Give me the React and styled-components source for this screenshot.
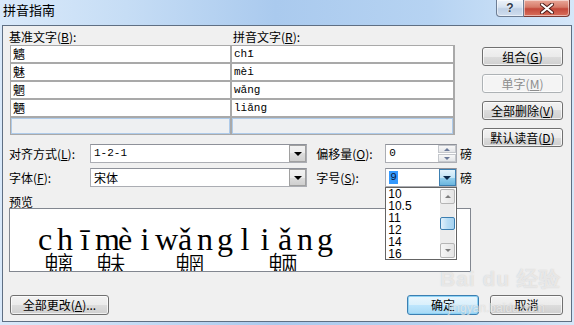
import React from "react";
import styled, { createGlobalStyle } from "styled-components";

const GlobalStyle = createGlobalStyle`
  html, body {
    margin: 0;
    padding: 0;
    background: #c9dff5;
  }
  body {
    font-family: "Noto Sans CJK SC", "Liberation Sans", sans-serif;
    font-size: 12px;
    color: #000;
  }
`;

const Window = styled.div`
  width: 574px;
  height: 325px;
  box-sizing: border-box;
  display: flex;
  flex-direction: column;
  padding: 0 2px 3px 2px;
  background: linear-gradient(90deg, #d9e9fa 0%, #c6ddf5 22%, #aacaee 48%, #b6d3f2 75%, #d5e7f9 100%);
`;

const TitleBar = styled.div`
  height: 25px;
  display: flex;
  align-items: flex-start;
  justify-content: space-between;
  margin: 0 -2px;
`;

const Title = styled.div`
  padding: 2px 0 0 3px;
  font-size: 13px;
  line-height: 16px;
  color: #000;
`;

const Caption = styled.div`
  display: flex;
  margin-right: 4px;
`;

const CapButton = styled.div`
  height: 17px;
  box-sizing: border-box;
  display: flex;
  align-items: center;
  justify-content: center;
  border: 1px solid ${(p) => (p.$close ? "#7a3a34" : "#6d7d94")};
  border-top: none;
  width: ${(p) => (p.$close ? "46px" : "28px")};
  border-radius: ${(p) => (p.$close ? "0 0 4px 0" : "0 0 0 4px")};
  border-left: ${(p) => (p.$close ? "none" : undefined)};
  background: ${(p) =>
    p.$close
      ? "linear-gradient(#e9a99a 0%, #d67a68 45%, #c3483a 55%, #d9705c 100%)"
      : "linear-gradient(#eef3fa 0%, #d6e2f0 45%, #bfd0e5 55%, #d0ddee 100%)"};
  box-shadow: inset 0 0 0 1px rgba(255, 255, 255, 0.5);
  font-family: "Liberation Sans", sans-serif;
  font-weight: bold;
  font-size: 12px;
  color: #2f3a4a;
  text-shadow: 0 0 2px #fff;
`;

const Client = styled.div`
  position: relative;
  flex: 1;
  background: #f0f0f0;
  border: 1px solid #5f6f83;
  display: flex;
  flex-direction: column;
`;

const Main = styled.div`
  display: flex;
  padding: 4px 0 0 6px;
  gap: 10px;
`;

const LeftCol = styled.div`
  width: 463px;
  display: flex;
  flex-direction: column;
`;

const HeadRow = styled.div`
  display: flex;
  line-height: 14px;
  height: 14px;
`;

const HeadLabel = styled.div`
  width: ${(p) => p.$w}px;
`;

const Key = styled.span`
  text-decoration: underline;
`;

const Grid = styled.div`
  margin: 1px 0 0 1px;
  width: 445px;
  box-sizing: border-box;
  display: grid;
  grid-template-columns: 219px 221px;
  grid-auto-rows: 16px;
  gap: 2px;
  padding: 1px;
  background: #a9a9a9;
`;

const Cell = styled.div`
  background: ${(p) => (p.$empty ? "#eef0f2" : "#fff")};
  box-shadow: ${(p) => (p.$empty ? "inset 0 0 0 1px #aecbea" : "none")};
  padding-left: 2px;
  line-height: 16px;
  font-size: ${(p) => (p.$mono ? "11px" : "12px")};
  font-family: ${(p) =>
    p.$mono
      ? '"Liberation Mono", "DejaVu Sans Mono", monospace'
      : '"Noto Sans CJK SC", sans-serif'};
  overflow: hidden;
  white-space: nowrap;
`;

const FormRow = styled.div`
  display: flex;
  align-items: center;
  height: 19px;
  margin-top: ${(p) => p.$top}px;
`;

const FieldLabel = styled.div`
  width: ${(p) => p.$w}px;
  margin-left: ${(p) => p.$ml || 0}px;
  flex-shrink: 0;
`;

const Combo = styled.div`
  position: relative;
  width: ${(p) => p.$w}px;
  height: 19px;
  box-sizing: border-box;
  border: 1px solid #abadb3;
  border-top-color: #8e9199;
  background: #fff;
  display: flex;
  align-items: stretch;
`;

const ComboText = styled.div`
  flex: 1;
  padding-left: 3px;
  line-height: 17px;
  font-family: ${(p) => (p.$mono ? '"Liberation Mono", monospace' : '"Noto Sans CJK SC", sans-serif')};
  font-size: ${(p) => (p.$mono ? "11px" : "12px")};
`;

const Selected = styled.span`
  display: inline-block;
  background: #3399ff;
  color: #0a1a40;
  line-height: 13px;
  padding: 0 1px;
  margin-top: 2px;
`;

const DropBtn = styled.div`
  width: 17px;
  box-sizing: border-box;
  border: 1px solid ${(p) => (p.$active ? "#3c7fb1" : "#a0a0a0")};
  background: ${(p) =>
    p.$active
      ? "linear-gradient(#e5f4fc 0%, #c4e5f6 50%, #98d1ef 50%, #6ab5dd 100%)"
      : "linear-gradient(#f2f2f2 0%, #ebebeb 50%, #dddddd 50%, #cfcfcf 100%)"};
  display: flex;
  align-items: center;
  justify-content: center;
`;

const Arrow = styled.div`
  width: 0;
  height: 0;
  border-left: ${(p) => p.$s}px solid transparent;
  border-right: ${(p) => p.$s}px solid transparent;
  border-top: ${(p) => (p.$up ? "none" : `${p.$s}px solid ${p.$c || "#000"}`)};
  border-bottom: ${(p) => (p.$up ? `${p.$s}px solid ${p.$c || "#000"}` : "none")};
`;

const Spin = styled.div`
  width: 18px;
  display: flex;
  flex-direction: column;
  gap: 1px;
`;

const SpinBtn = styled.div`
  flex: 1;
  box-sizing: border-box;
  border: 1px solid #c4c7cc;
  background: linear-gradient(#f8f8f8, #e3e5e8);
  display: flex;
  align-items: center;
  justify-content: center;
`;

const Unit = styled.div`
  margin-left: 3px;
`;

const DropList = styled.div`
  position: absolute;
  left: -1px;
  top: 18px;
  width: 72px;
  height: 73px;
  box-sizing: border-box;
  border: 1px solid #646464;
  background: #fff;
  display: flex;
  z-index: 2;
`;

const Items = styled.div`
  flex: 1;
  display: flex;
  flex-direction: column;
  padding-left: 2px;
  font-family: "Liberation Sans", sans-serif;
  font-size: 12px;
  line-height: 12px;
`;

const ScrollBar = styled.div`
  width: 15px;
  margin: 1px 1px 1px 0;
  background: #ececec;
  display: flex;
  flex-direction: column;
  justify-content: space-between;
`;

const ScrollBtn = styled.div`
  height: ${(p) => p.$h}px;
  box-sizing: border-box;
  border: 1px solid ${(p) => (p.$hot ? "#3c7fb1" : "#b5b5b5")};
  border-radius: 2px;
  background: ${(p) =>
    p.$hot
      ? "linear-gradient(90deg, #e2f1fb, #b8ddf5 50%, #a6d2f0)"
      : "linear-gradient(90deg, #f6f6f6, #e4e4e4)"};
  display: flex;
  align-items: center;
  justify-content: center;
`;

const PreviewLabel = styled.div`
  margin-top: 9px;
  line-height: 12px;
  height: 12px;
`;

const Preview = styled.div`
  width: 462px;
  height: 64px;
  box-sizing: border-box;
  border: 1px solid #828790;
  background: #fff;
  overflow: hidden;
  display: flex;
  padding: 14px 0 0 25px;
`;

const Group = styled.div`
  display: flex;
  flex-direction: column;
  align-items: center;
`;

const Pinyin = styled.div`
  display: flex;
  font-family: "Liberation Serif", "DejaVu Serif", serif;
  font-size: 32px;
  line-height: 33px;
  color: #000;
`;

/* SimSun latin is monospaced: give every letter the same cell */
const Glyph = styled.span`
  width: 20px;
  text-align: center;
`;

const Han = styled.div`
  font-family: "Noto Sans CJK SC", sans-serif;
  font-size: 30px;
  line-height: 30px;
  font-weight: 300;
  margin-top: -6px;
  transform: translateX(${(p) => p.$shift}px);
`;

const BtnCol = styled.div`
  display: flex;
  flex-direction: column;
  gap: 8px;
  padding-top: 17px;
`;

const Button = styled.div`
  width: ${(p) => p.$w}px;
  height: ${(p) => p.$h || 19}px;
  box-sizing: border-box;
  border: 1px solid ${(p) => (p.$disabled ? "#adb2b5" : p.$default ? "#3c7fb1" : "#707070")};
  border-radius: 3px;
  background: ${(p) =>
    p.$disabled
      ? "#f4f4f4"
      : p.$default
      ? "linear-gradient(#eaf6fd 0%, #d9f0fc 50%, #bee6fd 50%, #a7d9f5 100%)"
      : "linear-gradient(#f2f2f2 0%, #ebebeb 50%, #dddddd 50%, #cfcfcf 100%)"};
  box-shadow: ${(p) =>
    p.$default ? "inset 0 0 0 1px #8fd3f5" : "inset 0 0 0 1px rgba(255,255,255,0.7)"};
  color: ${(p) => (p.$disabled ? "#8d8d8d" : "#000")};
  display: flex;
  align-items: center;
  justify-content: center;
  line-height: 14px;
`;

const Bottom = styled.div`
  display: flex;
  justify-content: space-between;
  align-items: center;
  padding: 0 8px 0 7px;
  margin-top: 23px;
`;

const RightBtns = styled.div`
  display: flex;
  gap: 11px;
`;

const Watermark = styled.div`
  position: absolute;
  left: 437px;
  top: 241px;
  display: flex;
  flex-direction: column;
  align-items: flex-start;
  color: rgba(255, 255, 255, 0.6);
  text-shadow: 0 0 1px rgba(150, 150, 150, 0.5);
  pointer-events: none;
  z-index: 3;
`;

const WmLogo = styled.div`
  font-family: "Liberation Sans", sans-serif;
  font-size: 21px;
  line-height: 24px;
  font-weight: bold;
  letter-spacing: 1px;
`;

const WmUrl = styled.div`
  font-family: "Liberation Sans", sans-serif;
  font-size: 12px;
  line-height: 14px;
  margin: 10px 0 0 8px;
`;

const rows = [
  ["魑", "chī"],
  ["魅", "mèi"],
  ["魍", "wǎng"],
  ["魉", "liǎng"],
];

const groups = [
  ["chī", "魑", -6],
  ["mèi", "魅", -14],
  ["wǎng", "魍", -5],
  ["liǎng", "魉", -2],
];

const sizes = ["10", "10.5", "11", "12", "14", "16"];

const App = () => (
  <>
    <GlobalStyle />
    <Window>
      <TitleBar>
        <Title>拼音指南</Title>
        <Caption>
          <CapButton>?</CapButton>
          <CapButton $close>
            <svg width="16" height="11" viewBox="0 0 16 11">
              <path
                d="M3 1.5 L13 9.5 M13 1.5 L3 9.5"
                stroke="#4a1a16"
                strokeWidth="4"
                strokeLinecap="round"
              />
              <path
                d="M3 1.5 L13 9.5 M13 1.5 L3 9.5"
                stroke="#fff"
                strokeWidth="2.2"
                strokeLinecap="round"
              />
            </svg>
          </CapButton>
        </Caption>
      </TitleBar>
      <Client>
        <Main>
          <LeftCol>
            <HeadRow>
              <HeadLabel $w={224}>
                基准文字(<Key>B</Key>):
              </HeadLabel>
              <HeadLabel $w={200}>
                拼音文字(<Key>R</Key>):
              </HeadLabel>
            </HeadRow>
            <Grid>
              {rows.map(([han, py]) => (
                <React.Fragment key={han}>
                  <Cell>{han}</Cell>
                  <Cell $mono>{py}</Cell>
                </React.Fragment>
              ))}
              <Cell $empty />
              <Cell $empty />
            </Grid>

            <FormRow $top={9}>
              <FieldLabel $w={81}>
                对齐方式(<Key>L</Key>):
              </FieldLabel>
              <Combo $w={218}>
                <ComboText $mono>1-2-1</ComboText>
                <DropBtn>
                  <Arrow $s={4} />
                </DropBtn>
              </Combo>
              <FieldLabel $w={69} $ml={9}>
                偏移量(<Key>O</Key>):
              </FieldLabel>
              <Combo $w={72}>
                <ComboText $mono>0</ComboText>
                <Spin>
                  <SpinBtn>
                    <Arrow $up $s={3} $c="#6b7a99" />
                  </SpinBtn>
                  <SpinBtn>
                    <Arrow $s={3} $c="#6b7a99" />
                  </SpinBtn>
                </Spin>
              </Combo>
              <Unit>磅</Unit>
            </FormRow>

            <FormRow $top={5}>
              <FieldLabel $w={81}>
                字体(<Key>F</Key>):
              </FieldLabel>
              <Combo $w={218}>
                <ComboText>宋体</ComboText>
                <DropBtn>
                  <Arrow $s={4} />
                </DropBtn>
              </Combo>
              <FieldLabel $w={69} $ml={9}>
                字号(<Key>S</Key>):
              </FieldLabel>
              <Combo $w={72}>
                <ComboText $mono>
                  <Selected>9</Selected>
                </ComboText>
                <DropBtn $active>
                  <Arrow $s={4} $c="#0d2a4a" />
                </DropBtn>
                <DropList>
                  <Items>
                    {sizes.map((s) => (
                      <div key={s}>{s}</div>
                    ))}
                  </Items>
                  <ScrollBar>
                    <ScrollBtn $h={15}>
                      <Arrow $up $s={3} $c="#7d7d7d" />
                    </ScrollBtn>
                    <ScrollBtn $h={13} $hot />
                    <ScrollBtn $h={15}>
                      <Arrow $s={3} $c="#7d7d7d" />
                    </ScrollBtn>
                  </ScrollBar>
                </DropList>
              </Combo>
              <Unit>磅</Unit>
            </FormRow>

            <PreviewLabel>预览</PreviewLabel>
            <Preview>
              {groups.map(([py, han, shift]) => (
                <Group key={han}>
                  <Pinyin>
                    {[...py].map((ch, i) => (
                      <Glyph key={i}>{ch}</Glyph>
                    ))}
                  </Pinyin>
                  <Han $shift={shift}>{han}</Han>
                </Group>
              ))}
            </Preview>
          </LeftCol>

          <BtnCol>
            <Button $w={81}>
              组合(<Key>G</Key>)
            </Button>
            <Button $w={81} $disabled>
              单字(<Key>M</Key>)
            </Button>
            <Button $w={81}>
              全部删除(<Key>V</Key>)
            </Button>
            <Button $w={81}>
              默认读音(<Key>D</Key>)
            </Button>
          </BtnCol>
        </Main>

        <Bottom>
          <Button $w={99} $h={20}>
            全部更改(<Key>A</Key>)...
          </Button>
          <RightBtns>
            <Button $w={72} $h={20} $default>
              确定
            </Button>
            <Button $w={73} $h={20}>
              取消
            </Button>
          </RightBtns>
        </Bottom>

        <Watermark>
          <WmLogo>Bai du 经验</WmLogo>
          <WmUrl>jingyan.baidu.com</WmUrl>
        </Watermark>
      </Client>
    </Window>
  </>
);

export default App;
